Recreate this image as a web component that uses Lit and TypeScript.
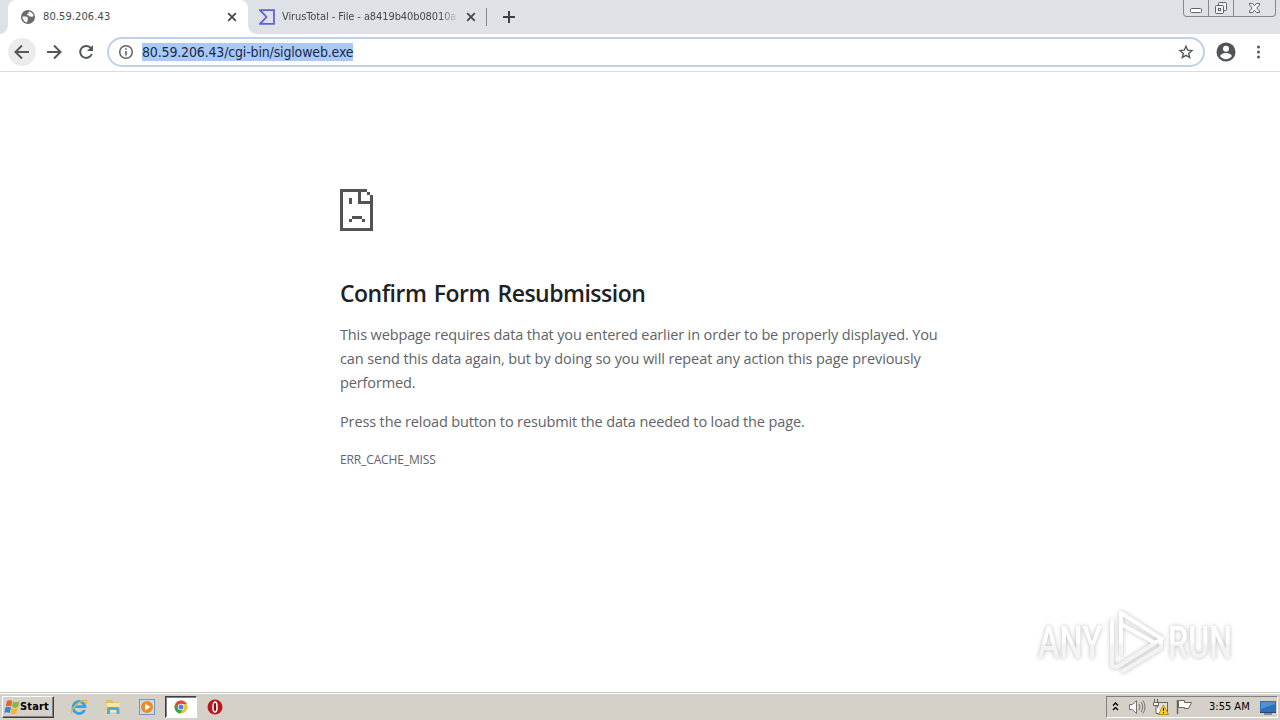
import { LitElement, html, css, svg } from 'lit';
import { customElement, property } from 'lit/decorators.js';

const closeIcon = svg`<path d="M1.2 1.2l7.6 7.6M8.8 1.2L1.2 8.8" stroke="#45494d" stroke-width="1.8" fill="none"/>`;

@customElement('browser-tabs')
export class BrowserTabs extends LitElement {
  static styles = css`
    :host {
      display: flex;
      height: 34px;
      background: #dee1e6;
      font: 11px/34px 'DejaVu Sans Condensed', Tahoma, sans-serif;
      color: #45494d;
      padding-left: 8px;
      box-sizing: border-box;
    }
    svg {
      display: block;
      flex: none;
    }
    .tab {
      display: flex;
      align-items: center;
      box-sizing: border-box;
      width: 240px;
      padding: 0 11px 0 12px;
      position: relative;
    }
    .active {
      background: #fff;
      border-radius: 8px 8px 0 0;
    }
    .tab + .tab {
      width: 239px;
      padding-left: 11px;
    }
    .active::before,
    .active::after {
      content: '';
      position: absolute;
      bottom: 0;
      width: 8px;
      height: 8px;
    }
    .active::before {
      left: -8px;
      background: radial-gradient(circle at 0 0, transparent 7.5px, #fff 8px);
    }
    .active::after {
      right: -8px;
      background: radial-gradient(circle at 100% 0, transparent 7.5px, #fff 8px);
    }
    .title {
      flex: 1;
      margin: 0 10px 0 7px;
      overflow: hidden;
      white-space: nowrap;
      letter-spacing: -0.1px;
    }
    .ip {
      letter-spacing: 0.1px;
    }
    .fade {
      mask-image: linear-gradient(to right, #000 158px, transparent 177px);
    }
    .divider {
      width: 1px;
      height: 18px;
      margin: 8px 16px 0 -1px;
      background: #85888d;
    }
    .plus {
      margin-top: 11px;
    }
    .window {
      display: flex;
      margin: 0 4px 0 auto;
      height: 17px;
      border: 1px solid #85898f;
      border-top: 0;
      border-radius: 0 0 4px 4px;
      box-sizing: border-box;
    }
    .window span {
      display: flex;
      justify-content: center;
      width: 24px;
    }
    .window span + span {
      border-left: 1px solid #85898f;
    }
    .window span:last-child {
      width: 41px;
    }
  `;

  render() {
    return html`
      <div class="tab active">
        <svg width="16" height="16" viewBox="0 0 16 16">
          <circle cx="8" cy="8" r="7" fill="#686c70" />
          <path d="M2.5 7.500c2.500-.2 5 0 5.500 1.200.3 1-.8 1.500-.4 2.500.2.800-.6 1.300-.4 2.200C4.500 13 2.500 10.500 2.500 7.500zM8.500 2.500c2.700.2 4.700 2.200 5.100 4.500l-1.400.8-2.400-.2-1-1.200-1.800-.3.3-1.300 1.500-.5z" fill="#fff" />
        </svg>
        <div class="title ip">80.59.206.43</div>
        <svg width="10" height="10">${closeIcon}</svg>
      </div>
      <div class="tab">
        <svg width="16" height="16" viewBox="0 0 16 16">
          <path d="M1 1.200H15V14.800H1L7.500 8z" fill="none" stroke="#5c62dc" stroke-width="1.800" />
        </svg>
        <div class="title fade">VirusTotal - File - a8419b40b08010a</div>
        <svg width="10" height="10">${closeIcon}</svg>
      </div>
      <div class="divider"></div>
      <svg class="plus" width="12" height="12"><path d="M6 0v12M0 6h12" stroke="#3c4043" stroke-width="2" /></svg>
      <div class="window">
        <span><svg width="14" height="16"><rect x="1.500" y="8.500" width="11" height="4" rx="1" fill="#fff" stroke="#60646a" /></svg></span>
        <span>
          <svg width="14" height="16" fill="#eceef1" stroke="#60646a">
            <rect x="4.500" y="2.500" width="8" height="8" rx="1" />
            <rect x="1.500" y="5.500" width="8" height="8" rx="1" />
            <rect x="4.500" y="8.500" width="2" height="2" />
          </svg>
        </span>
        <span>
          <svg width="13" height="16">
            <path d="M1.500 3.500h3l2 2.200 2-2.200h3v1.500l-2.800 3 2.800 3v1.500h-3l-2-2.200-2 2.200h-3V11l2.800-3-2.800-3z" fill="#f4f5f7" stroke="#60646a" />
          </svg>
        </span>
      </div>
    `;
  }
}

@customElement('browser-toolbar')
export class BrowserToolbar extends LitElement {
  @property() url = '';

  static styles = css`
    :host {
      display: flex;
      align-items: center;
      box-sizing: border-box;
      height: 38px;
      padding: 0 14px 1px 8px;
      background: #fff;
      border-bottom: 1px solid #d9dbde;
    }
    svg {
      display: block;
      flex: none;
    }
    .button {
      display: grid;
      place-items: center;
      width: 28px;
      height: 28px;
      margin-right: 4px;
      border-radius: 50%;
    }
    .hover {
      background: #ececed;
    }
    .omnibox {
      flex: 1;
      display: flex;
      align-items: center;
      box-sizing: border-box;
      height: 30px;
      margin: 0 10px 0 3px;
      padding: 0 9px;
      border: 2px solid #bfd0eb;
      border-radius: 15px;
    }
    .url {
      margin: 0 auto 0 8px;
      height: 18px;
      background: #a9c9f8;
      color: #1c2a48;
      font: 14px/18px 'DejaVu Sans Condensed', Tahoma, sans-serif;
      letter-spacing: -0.16px;
      white-space: nowrap;
    }
    .menu {
      margin-left: 13px;
    }
  `;

  render() {
    return html`
      <div class="button hover">
        <svg width="16" height="16" fill="none" stroke="#54585c" stroke-width="2"><path d="M15 8H2M8 1.500L1.500 8 8 14.500" /></svg>
      </div>
      <div class="button">
        <svg width="16" height="16" fill="none" stroke="#54585c" stroke-width="2"><path d="M1 8h13M8 1.500L14.500 8 8 14.500" /></svg>
      </div>
      <div class="button">
        <svg width="16" height="16"><path d="M13 4.300A6 6 0 1 0 13.800 10" fill="none" stroke="#54585c" stroke-width="2" /><path d="M15 1v6H9z" fill="#54585c" /></svg>
      </div>
      <div class="omnibox">
        <svg width="16" height="16"><circle cx="8" cy="8" r="6.300" fill="none" stroke="#5f6368" stroke-width="1.500" /><path d="M8 7v4.500M8 4.300v1.500" stroke="#5f6368" stroke-width="1.600" /></svg>
        <span class="url">${this.url}</span>
        <svg width="16" height="16"><path d="M8 2.300l1.700 3.900 4.200.4-3.200 2.800 1 4.200L8 11.400l-3.700 2.200 1-4.200-3.200-2.800 4.200-.4z" fill="none" stroke="#54585c" stroke-width="1.400" /></svg>
      </div>
      <svg width="22" height="22" viewBox="0 0 22 22">
        <circle cx="11" cy="11" r="9.500" fill="#505458" />
        <circle cx="11" cy="7.800" r="3" fill="#fff" />
        <path d="M5 15c1-2 3.500-3 6-3s5 1 6 3c-1.300 2-3.500 3.200-6 3.200S6.300 17 5 15z" fill="#fff" />
      </svg>
      <svg class="menu" width="16" height="16" fill="#54585c"><circle cx="8.500" cy="3" r="1.500" /><circle cx="8.500" cy="8" r="1.500" /><circle cx="8.500" cy="13" r="1.500" /></svg>
    `;
  }
}

@customElement('error-page')
export class ErrorPage extends LitElement {
  static styles = css`
    :host {
      display: block;
      box-sizing: border-box;
      flex: 1;
      padding: 117px 0 0 340px;
      position: relative;
      background: #fff;
      color: #606367;
      font: 14.5px/24px 'Open Sans', 'Noto Sans', sans-serif;
      letter-spacing: -0.13px;
      white-space: nowrap;
    }
    svg {
      display: block;
    }
    h1 {
      margin: 46px 0 14px;
      font-size: 23px;
      font-weight: 600;
      line-height: 32px;
      color: #202124;
      letter-spacing: -0.5px;
      word-spacing: 2px;
    }
    p {
      margin: 0 0 15px;
    }
    .line {
      display: block;
      width: max-content;
    }
    .loose {
      letter-spacing: -0.09px;
    }
    .code {
      font-size: 12px;
      line-height: 22px;
      letter-spacing: -0.13px;
    }
    .watermark {
      position: absolute;
      left: 1030px;
      top: 532px;
      overflow: visible;
      filter: drop-shadow(0 0 2px #0004);
    }
    .watermark text {
      font: 500 44px Roboto, 'Open Sans', sans-serif;
      letter-spacing: 0;
    }
  `;

  render() {
    return html`
      <svg width="33" height="42" shape-rendering="crispEdges" fill="#535353">
        <path d="M0 0h27v3H3v36h27V15H18V3h3v9h9V6h3v36H0zM27 3h3v3h-3z" />
        <path d="M9 9h3v6H9zM12 27h10v3H12zM9 30h3v3H9zM22 30h3v3h-3z" />
      </svg>
      <h1><span class="line">Confirm Form Resubmission</span></h1>
      <p>
        <span class="line">This webpage requires data that you entered earlier in order to be properly displayed. You</span>
        <span class="line loose">can send this data again, but by doing so you will repeat any action this page previously</span>
        <span class="line">performed.</span>
      </p>
      <p><span class="line">Press the reload button to resubmit the data needed to load the page.</span></p>
      <div class="code"><span class="line">ERR_CACHE_MISS</span></div>
      <svg class="watermark" width="220" height="76">
        <defs>
          <linearGradient id="sheen" gradientUnits="userSpaceOnUse" x1="0" y1="10" x2="0" y2="66">
            <stop offset="0.5" stop-color="#fff" />
            <stop offset="0.55" stop-color="#f3f3f3" />
          </linearGradient>
        </defs>
        <g fill="url(#sheen)">
          <text x="8" y="54" textLength="64" lengthAdjust="spacingAndGlyphs">ANY</text>
          <text x="138" y="54" textLength="64" lengthAdjust="spacingAndGlyphs">RUN</text>
        </g>
        <g fill="none" stroke="url(#sheen)" stroke-width="4" stroke-linejoin="round" stroke-linecap="round">
          <path d="M91 50V9l41 26M82 17v45l5 1 43-27M91 50V20l34 19M93 67l38-23V38" />
        </g>
      </svg>
    `;
  }
}

@customElement('task-bar')
export class TaskBar extends LitElement {
  static styles = css`
    :host {
      display: flex;
      align-items: center;
      box-sizing: border-box;
      height: 28px;
      padding: 1px 2px 0 2px;
      background: #d5d1c9;
      border-top: 1px solid #c9c6c0;
      box-shadow: inset 0 1px #fff;
      font: 11px/20px 'DejaVu Sans Condensed', Tahoma, sans-serif;
      color: #000;
    }
    svg {
      display: block;
      flex: none;
    }
    .start {
      display: flex;
      align-items: center;
      box-sizing: border-box;
      width: 52px;
      height: 22px;
      padding-left: 1px;
      border: 1px solid;
      border-color: #fff #404040 #404040 #fff;
      box-shadow: inset -1px -1px #808080;
      font-weight: 700;
      letter-spacing: 0.15px;
    }
    .apps {
      display: flex;
      align-items: center;
      margin-left: 9px;
    }
    .app {
      display: grid;
      place-items: center;
      box-sizing: border-box;
      width: 32px;
      height: 22px;
      margin-right: 2px;
    }
    .current {
      background: #fff;
      border: 1px solid;
      border-color: #404040 #fff #fff #404040;
      box-shadow: inset 1px 1px #808080;
    }
    .tray {
      display: flex;
      align-items: center;
      box-sizing: border-box;
      width: 172px;
      height: 22px;
      margin-left: auto;
      padding-left: 4px;
      border: 1px solid;
      border-color: #808080 #fff #fff #808080;
    }
    .volume {
      margin-left: 8px;
    }
    .network,
    .flag {
      margin-left: 6px;
    }
    .time {
      margin-left: 16px;
      width: 43px;
      white-space: nowrap;
    }
    .desktop {
      margin-left: 8px;
    }
  `;

  render() {
    return html`
      <div class="start">
        <svg width="16" height="16">
          <path d="M3 2Q5.500.5 8.200 2L7.200 7.500Q4.500 6 1.800 7.300z" fill="#e6622c" />
          <path d="M9 2.500q2.500 1.400 6.500 0L14 8q-2.800 1.300-6 0z" fill="#86b83c" />
          <path d="M1.500 8.300Q4 7 7 8.500L5.700 14Q3 12.500.3 13.700z" fill="#3d83cb" />
          <path d="M7.800 9q2.700 1.300 6 0L12.300 14.500q-2.800 1.300-5.800 0z" fill="#f0b72d" />
        </svg>
        <span>Start</span>
      </div>
      <div class="apps">
        <div class="app">
          <svg width="18" height="18" fill="none">
            <path d="M14.500 12A6 6 0 1 1 15 8.700H5" stroke="#3aa3df" stroke-width="2.800" />
            <path d="M2 15C-.5 12 11 1 16 2.500c1 .5.700 2 0 3" stroke="#e6b93a" stroke-width="1.400" />
          </svg>
        </div>
        <div class="app">
          <svg width="16" height="16">
            <path d="M1 1h6l1 2h6v9H1z" fill="#dfc067" />
            <path d="M1.500 4h13v9h-13z" fill="#f6e7a4" />
            <path d="M2 15V9.500Q2 8 3.500 8h9.500Q14.500 8 14.500 9.500V15h-3v-4H5v4z" fill="#55a9d8" />
          </svg>
        </div>
        <div class="app">
          <svg width="16" height="16">
            <rect x=".5" y=".5" width="15" height="15" fill="#c7dbed" stroke="#6c9ac5" />
            <circle cx="8" cy="8" r="6" fill="#ef8b22" />
            <path d="M6 4.500v7L11.500 8z" fill="#fff" />
          </svg>
        </div>
        <div class="app current">
          <svg width="14" height="14" viewBox="0 0 14 14">
            <circle cx="7" cy="7" r="6.500" fill="#f2c22d" />
            <path d="M1.300 3.800A6.500 6.500 0 0 1 12.800 4H7L4.300 8.500z" fill="#db4a3c" />
            <path d="M1.300 3.800L4.500 9l4 .8-2.200 3.700A6.500 6.500 0 0 1 1.300 3.800z" fill="#3c9f52" />
            <circle cx="7" cy="7" r="3.200" fill="#fff" />
            <circle cx="7" cy="7" r="2.500" fill="#4684e5" />
          </svg>
        </div>
        <div class="app">
          <svg width="16" height="16">
            <circle cx="8" cy="8" r="7.500" fill="#b8181b" />
            <ellipse cx="8" cy="8" rx="2" ry="5" fill="#8b0b10" stroke="#fff" stroke-width="1.600" />
          </svg>
        </div>
      </div>
      <div class="tray">
        <svg width="9" height="12" fill="none" stroke="#000" stroke-width="1.400"><path d="M2 4.500l2.500-2.500L7 4.500M2 9l2.500-2.500L7 9" /></svg>
        <svg class="volume" width="18" height="18" fill="none" stroke="#77746e">
          <path d="M1.500 6.500h3l4-4v13l-4-4h-3z" fill="#fff" />
          <path d="M11 6q2 3 0 6M13 4q3.500 5 0 10M15 2.500q4 6.500 0 13" />
        </svg>
        <svg class="network" width="18" height="18">
          <rect x="5.500" y="4.500" width="10" height="9" fill="#e1e1d9" stroke="#65635f" />
          <path d="M2.500 1v3M5.500 1v3M1.500 4.500h5v3h-5zM4 8v7.500h7" fill="#fff" stroke="#65635f" />
          <path d="M11.500 7l5 9.500h-10z" fill="#ffd42d" stroke="#b68c12" />
          <path d="M11.500 10v3M11.500 14v1.300" stroke="#000" />
        </svg>
        <svg class="flag" width="17" height="18" stroke="#68655f"><path d="M1.500 2v14" stroke-width="1.500" /><path d="M2.500 2.500h6v2h7l-3 6h-4v-1h-6z" fill="#fff" /></svg>
        <span class="time">3:55 AM</span>
        <svg class="desktop" width="16" height="16">
          <rect y="2" width="16" height="11" fill="#2f6fb8" />
          <path d="M1 3h14v2L1 10z" fill="#4e91d4" />
          <path d="M0 13.500h16M4 15h8" stroke="#23466c" />
        </svg>
      </div>
    `;
  }
}

@customElement('app-root')
export class AppRoot extends LitElement {
  static styles = css`
    :host {
      display: flex;
      flex-direction: column;
      width: 1280px;
      height: 720px;
      overflow: hidden;
    }
  `;

  render() {
    return html`
      <browser-tabs></browser-tabs>
      <browser-toolbar url="80.59.206.43/cgi-bin/sigloweb.exe"></browser-toolbar>
      <error-page></error-page>
      <task-bar></task-bar>
    `;
  }
}
